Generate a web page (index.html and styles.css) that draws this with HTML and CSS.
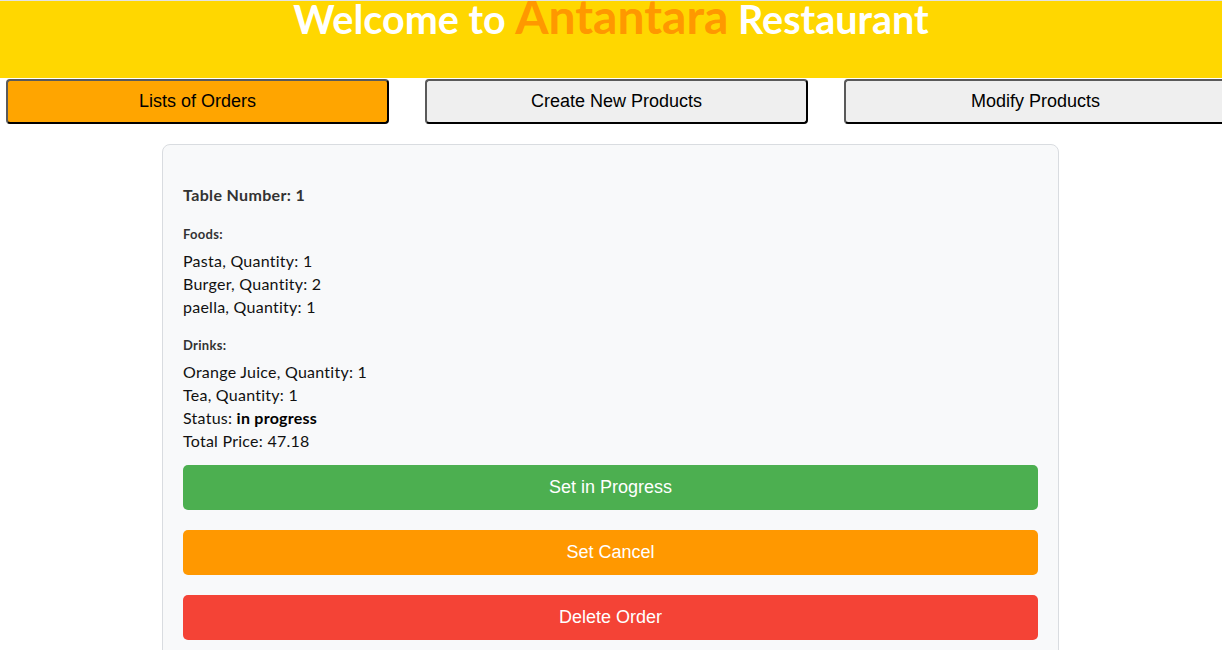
FILE: index.html
```html
<!DOCTYPE html>
<html lang="en">
<head>
<meta charset="utf-8">
<title>Antantara Restaurant</title>
<link rel="stylesheet" href="styles.css">
</head>
<body>
<div class="topline"></div>
<header class="header">
  <h1 class="title">Welcome to <span class="brand">Antantara</span> Restaurant</h1>
</header>
<nav class="tabs">
  <button class="tab tab-active">Lists of Orders</button>
  <button class="tab">Create New Products</button>
  <button class="tab">Modify Products</button>
</nav>
<main class="card">
  <h3 class="table-no">Table Number: 1</h3>
  <h4 class="group">Foods:</h4>
  <ul class="items">
    <li>Pasta, Quantity: 1</li>
    <li>Burger, Quantity: 2</li>
    <li>paella, Quantity: 1</li>
  </ul>
  <h4 class="group group-drinks">Drinks:</h4>
  <ul class="items">
    <li>Orange Juice, Quantity: 1</li>
    <li>Tea, Quantity: 1</li>
    <li>Status: <strong>in progress</strong></li>
    <li>Total Price: 47.18</li>
  </ul>
  <div class="actions">
    <button class="action action-progress">Set in Progress</button>
    <button class="action action-cancel">Set Cancel</button>
    <button class="action action-delete">Delete Order</button>
  </div>
</main>
</body>
</html>
```
FILE: styles.css
```css
html, body {
  margin: 0;
  padding: 0;
  background: #ffffff;
  overflow-x: hidden;
}
body {
  font-family: "Lato", "Open Sans", sans-serif;
  color: #111;
}
.topline {
  height: 1px;
  background: #e2e2e2;
}
.header {
  background: #ffd700;
  height: 77px;
  overflow: hidden;
}
.title {
  margin: -5px 0 0 0;
  text-align: center;
  color: #ffffff;
  font-size: 39.5px;
  line-height: 40px;
  font-weight: 700;
  white-space: nowrap;
}
.brand {
  color: #ff9800;
  font-size: 48px;
}
.tabs {
  display: flex;
  gap: 36px;
  padding: 1px 0 0 6px;
  width: 1300px;
}
.tab {
  flex: 0 0 383px;
  height: 45px;
  font-family: "Liberation Sans", Arial, sans-serif;
  font-size: 18px;
  color: #000;
  background: #efefef;
  border-width: 2px;
  border-style: solid;
  border-color: #5a5a5a #000 #000 #5a5a5a;
  border-radius: 4px;
  padding: 0;
}
.tab-active {
  background: #ffa500;
}
.card {
  width: 855px;
  margin: 20px 0 0 162px;
  padding: 20px;
  background: #f8f9fa;
  border: 1px solid #d9dce0;
  border-radius: 8px;
  color: #111;
}
.table-no {
  margin: 20px 0 0;
  font-size: 16px;
  line-height: 20px;
  font-weight: 700;
  letter-spacing: 0.35px;
  color: #333;
}
.group {
  margin: 21px 0 0;
  font-size: 13px;
  line-height: 16px;
  font-weight: 700;
  letter-spacing: 0.3px;
  color: #333;
}
.group-drinks {
  margin-top: 19px;
}
.items {
  list-style: none;
  margin: 7px 0 0;
  padding: 0;
  font-size: 16px;
  line-height: 23px;
  letter-spacing: 0.25px;
}
.items strong {
  font-weight: 700;
  color: #000;
}
.actions {
  display: flex;
  flex-direction: column;
  gap: 20px;
  margin-top: 13px;
}
.action {
  height: 45px;
  border: none;
  border-radius: 5px;
  color: #fff;
  font-family: "Liberation Sans", Arial, sans-serif;
  font-size: 18px;
  padding: 0;
}
.action-progress { background: #4caf50; }
.action-cancel { background: #ff9800; }
.action-delete { background: #f44336; }
```
